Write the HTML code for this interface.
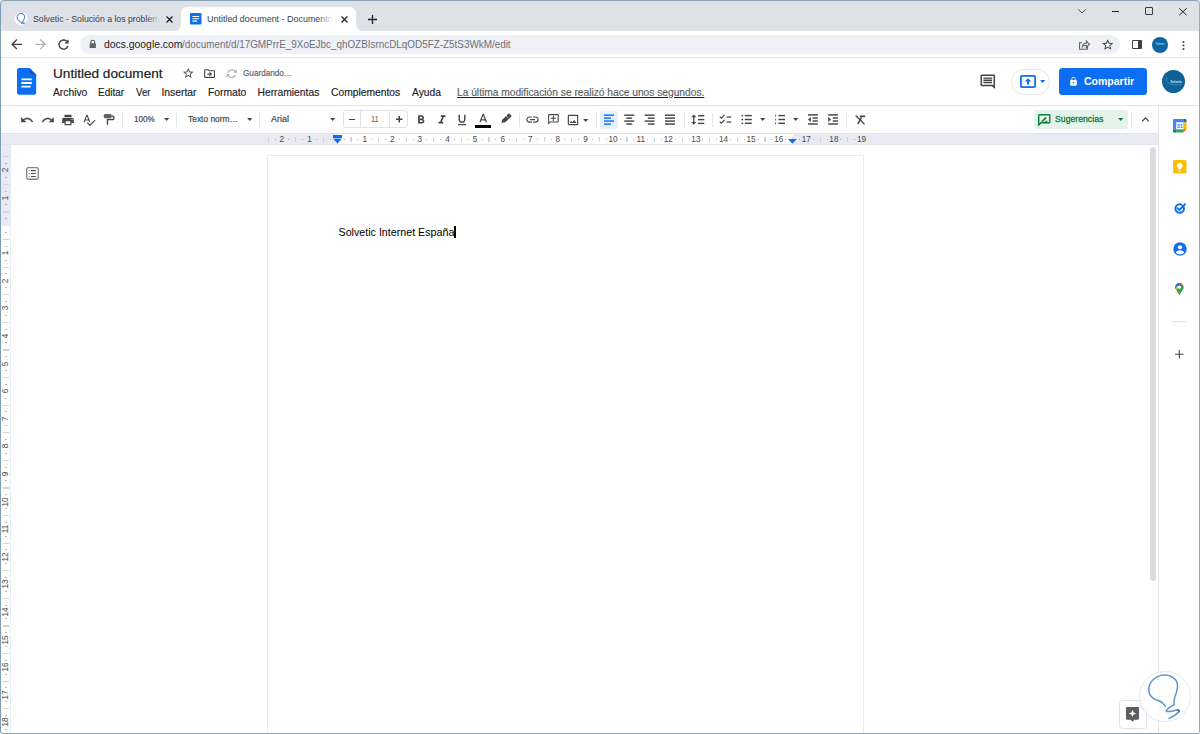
<!DOCTYPE html>
<html lang="es"><head><meta charset="utf-8"><title>Untitled document - Documentos de Google</title>
<style>
*{margin:0;padding:0;box-sizing:border-box}
html,body{width:1200px;height:734px;overflow:hidden;background:#fff}
body{position:relative;font-family:"Liberation Sans",sans-serif;color:#202124}
.a{position:absolute}
.t{position:absolute;white-space:nowrap;line-height:1;transform-origin:0 50%}
svg{position:absolute;overflow:visible}
.sep{position:absolute;width:1px;background:#e4e6ee}
/* chrome */
#tabstrip{left:0;top:0;width:1200px;height:31px;background:#dfe1e9}
#tab2{left:181px;top:7px;width:175px;height:24px;background:#fff;border-radius:6px 6px 0 0}
#navbar{left:0;top:31px;width:1200px;height:26px;background:#fff}
#omni{left:80px;top:35px;width:1040px;height:19px;border-radius:9.500px;background:#eff1f7}
#navline{left:0;top:57px;width:1200px;height:1px;background:#e3e5e8}
/* docs */
#tbline{left:0;top:105px;width:1200px;height:1px;background:#e1e3e6}
#ruler{left:1px;top:133px;width:1157px;height:12px;background:#e9eaf3;border-top:1px solid #e0e1e8}
#rulerw{left:338px;top:134px;width:454.500px;height:10px;background:#fff}
#rulerline{left:1px;top:144px;width:1157px;height:1px;background:#e2e3ec}
#vruler{left:1px;top:145px;width:10px;height:589px;background:#fff;border-right:1px solid #eceef3}
#vrulerg{left:1px;top:145px;width:9.500px;height:81px;background:#e9eaf3}
#page{left:267px;top:155px;width:597px;height:600px;background:#fff;border:1px solid #eaebee}
#side{left:1158px;top:106px;width:41px;height:628px;background:#fff;border-left:1px solid #e1e3e6}
#scroll{left:1150px;top:147px;width:6px;height:434px;border-radius:3px;background:#dadce0}
.m{top:88px;font-size:10.300px;color:#202124;-webkit-text-stroke:.15px #202124}
.tb{top:113.600px;font-size:9.400px;color:#444746;-webkit-text-stroke:.2px #444746}
.rn{top:135.500px;width:20px;text-align:center;font-size:8.200px;color:#474a4e}
.rb{top:136.600px;width:1.300px;height:5.500px;background:#d2d4dc}
.rd{top:139px;width:1px;height:1px;background:#a9adb4}
.vn{left:1.300px;width:10px;height:8px;text-align:center;font-size:8.200px;color:#474a4e;transform:rotate(-90deg);transform-origin:50% 50%}
.vb{left:3px;width:5.500px;height:1.300px;background:#d2d4dc}
.vd{left:4.500px;width:2px;height:1px;background:#b4b8bf}
/* window border */
#wb{left:0;top:0;width:1200px;height:734px;border:1px solid #8aa3b4;border-left-color:#7f9db3;border-right-color:#a3a9b0;border-bottom-color:#8fa3b1;border-radius:5px 5px 3px 3px;pointer-events:none}
</style></head><body>

<!-- CHROME -->
<div class="a" id="tabstrip"></div>
<div class="a" id="tab2"></div>
<div class="a" id="navbar"></div>
<div class="a" id="omni"></div>
<div class="a" id="navline"></div>


<!-- tab 1 -->
<svg style="left:15px;top:12px" width="12" height="14" viewBox="0 0 12 14"><circle cx="6" cy="6.5" r="6.5" fill="#fff"/><path d="M7.3 10.6C3.2 9.2 1.2 6.6 2.3 3.9 3.3 1.4 6.6.7 8.5 2.3c1.7 1.5 1.3 4-.2 6.2-.4.7-.6 1.500-.4 2.300" fill="none" stroke="#5b8fc7" stroke-width="1.1" stroke-linecap="round"/><path d="M6.400 11.300c.8-.500 1.500-.400 2.100.100" fill="none" stroke="#4a86c8" stroke-width="1.100" stroke-linecap="round"/><circle cx="9" cy="11.400" r=".800" fill="#3b82f6"/></svg>
<div class="t" id="tt1" style="left:32.500px;top:14.300px;font-size:9.800px;transform:scaleX(.89);color:#3c4043;width:143.500px;overflow:hidden">Solvetic - Solución a los problemas</div>
<div class="a" style="left:147px;top:10px;width:14px;height:18px;background:linear-gradient(90deg,rgba(223,225,233,0),#dfe1e9 90%)"></div>
<svg style="left:166px;top:15.500px" width="7" height="7" viewBox="0 0 7 7"><path d="M.5.500l6 6M6.500.500l-6 6" stroke="#202124" stroke-width="1.300" fill="none"/></svg>
<!-- tab 2 -->
<div class="a" style="left:175px;top:25px;width:6px;height:6px;background:radial-gradient(circle at 0 0,rgba(255,255,255,0) 5.500px,#fff 6px)"></div>
<div class="a" style="left:356px;top:25px;width:6px;height:6px;background:radial-gradient(circle at 100% 0,rgba(255,255,255,0) 5.500px,#fff 6px)"></div>
<svg style="left:189.500px;top:13px" width="11.500" height="11.500" viewBox="0 0 12 12"><rect width="12" height="12" rx="1.300" fill="#0b6ef3"/><path d="M2.500 3.600h7M2.500 6h7M2.500 8.400h5" stroke="#fff" stroke-width="1.200"/></svg>
<div class="t" id="tt2" style="left:207px;top:14.300px;font-size:9.800px;transform:scaleX(.913);color:#3c4043;width:140.200px;overflow:hidden">Untitled document - Documentos de Google</div>
<div class="a" style="left:318px;top:10px;width:18px;height:18px;background:linear-gradient(90deg,rgba(255,255,255,0),#fff 85%)"></div>
<svg style="left:340.500px;top:15.500px" width="7" height="7" viewBox="0 0 7 7"><path d="M.5.500l6 6M6.500.500l-6 6" stroke="#202124" stroke-width="1.300" fill="none"/></svg>
<svg style="left:367.500px;top:14.500px" width="9" height="9" viewBox="0 0 9 9"><path d="M4.500 0v9M0 4.500h9" stroke="#202124" stroke-width="1.300" fill="none"/></svg>
<!-- window controls -->
<svg style="left:1078px;top:8.700px" width="8" height="4.500" viewBox="0 0 9 5"><path d="M.4.400l4.100 4 4.100-4" stroke="#3c4043" stroke-width="1" fill="none"/></svg>
<div class="a" style="left:1112px;top:10.800px;width:7px;height:1.300px;background:#202124"></div>
<div class="a" style="left:1144.500px;top:7px;width:8.500px;height:8px;border:1px solid #3c4043;border-radius:1px"></div>
<svg style="left:1178.500px;top:7.500px" width="8" height="7.500" viewBox="0 0 8 7.500"><path d="M.3.300l7.400 6.900M7.700.300L.3 7.200" stroke="#202124" stroke-width="1" fill="none"/></svg>
<!-- nav -->
<svg style="left:0;top:30px" width="110" height="30" viewBox="0 30 110 30"><path d="M22.200 44.300H12.300M16.900 39.500l-4.800 4.800 4.800 4.800" fill="none" stroke="#3c4043" stroke-width="1.350"/><path d="M35.200 44.300h9.700M40.300 39.500l4.800 4.800-4.800 4.800" fill="none" stroke="#a9b1b9" stroke-width="1.300"/><path d="M67.900 46.100a4.550 4.550 0 1 1-1.200-4.900" fill="none" stroke="#3c4043" stroke-width="1.400"/><path d="M68.600 39.300v4.200h-4.200z" fill="#3c4043"/><path d="M90.900 43.400v-1.300a1.900 1.900 0 0 1 3.800 0v1.300" fill="none" stroke="#5f6368" stroke-width="1.150"/><rect x="89.700" y="43.200" width="6.200" height="4.800" rx=".6" fill="#5f6368"/></svg>
<div class="t" id="url" style="left:104px;top:40.400px;font-size:10.380px;color:#6b7075"><span style="color:#202124">docs.google.com</span><span style="display:inline-block;transform:scaleX(.953);transform-origin:0 50%">/document/d/17GMPrrE_9XoEJbc_qhOZBIsrncDLqOD5FZ-Z5tS3WkM/edit</span></div>
<svg style="left:1077px;top:37.700px" width="13.600" height="13.600" viewBox="0 0 24 24"><path fill="none" stroke="#5f6368" stroke-width="1.900" d="M9 8.500H4.500V20h14v-4.500M9.500 15.500c.5-4 3.500-6 7-6.200V5.500l5.500 5.500-5.500 5.500v-3.700c-3.500 0-5.500.700-7 2.700z"/></svg>
<svg style="left:1100.500px;top:37.500px" width="13.500" height="13.500" viewBox="0 0 24 24"><path fill="#3c4043" d="M22 9.240l-7.190-.620L12 2 9.190 8.630 2 9.240l5.460 4.730L5.820 21 12 17.270 18.180 21l-1.630-7.030L22 9.240zM12 15.400l-3.760 2.270 1-4.280-3.320-2.880 4.380-.380L12 6.100l1.710 4.040 4.380.380-3.320 2.880 1 4.280L12 15.400z"/></svg>
<div class="a" style="left:1131.500px;top:39.500px;width:10.500px;height:9.500px;border:1.500px solid #3c4043;border-right-width:4px;border-radius:1px"></div>
<div class="a" style="left:1152px;top:36.500px;width:16px;height:16px;border-radius:50%;background:#0d65a3"></div>
<div class="t" style="left:1155.500px;top:43.500px;font-size:2.600px;color:#cfe3f3">Solvetic</div>
<svg style="left:1182px;top:40.500px" width="3" height="9" viewBox="0 0 3 9"><circle cx="1.500" cy="1.100" r="1" fill="#3c4043"/><circle cx="1.500" cy="4.500" r="1" fill="#3c4043"/><circle cx="1.500" cy="7.900" r="1" fill="#3c4043"/></svg>

<!-- DOCS -->

<!-- header -->
<svg style="left:17.400px;top:68.200px" width="19.200" height="26.700" viewBox="0 0 19.200 26.700"><path d="M1.900 0h10.600l6.700 6.700v18.100c0 1.050-.85 1.900-1.900 1.900H1.900C.85 26.700 0 25.850 0 24.800V1.900C0 .85.850 0 1.900 0z" fill="#0b6ef3"/><path d="M12.500 0l6.700 6.700v1.200l-6.700-3.500z" fill="#0557d8"/><path d="M4.400 11.400h10.400M4.400 15h10.400M4.400 18.700h9.200" stroke="#fff" stroke-width="1.800"/></svg>
<div class="t" id="title" style="left:53px;top:67px;font-size:13.600px;color:#202124;-webkit-text-stroke:.2px #202124">Untitled document</div>
<svg style="left:181.700px;top:67px" width="12.600" height="12.600" viewBox="0 0 24 24"><path fill="#444746" d="M22 9.240l-7.190-.620L12 2 9.190 8.630 2 9.240l5.460 4.730L5.820 21 12 17.270 18.180 21l-1.630-7.030L22 9.240zM12 15.400l-3.760 2.270 1-4.280-3.320-2.880 4.380-.380L12 6.100l1.710 4.040 4.380.380-3.320 2.880 1 4.280L12 15.400z"/></svg>
<svg style="left:203px;top:67.100px" width="13.100" height="13.100" viewBox="0 0 24 24"><path fill="#444746" d="M20 6h-8l-2-2H4c-1.100 0-2 .900-2 2v12c0 1.100.900 2 2 2h16c1.100 0 2-.900 2-2V8c0-1.100-.900-2-2-2zm0 12H4V6h5.170l2 2H20v10zm-7.160-4H8v-2h4.840l-1.590-1.590L12.660 9l4 4-4 4-1.410-1.410L12.840 14z"/></svg>
<svg style="left:224px;top:66px" width="16" height="16" viewBox="224 66 16 16"><path d="M227.93 72.59A3.9 3.9 0 0 1 235.23 71.95" fill="none" stroke="#a4aab1" stroke-width="1.150"/><path d="M235.47 74.61A3.9 3.9 0 0 1 228.17 75.25" fill="none" stroke="#a4aab1" stroke-width="1.150"/><path d="M236.83 69.55v3.300h-3.300z" fill="#a4aab1"/><path d="M226.57 77.65v-3.300h3.300z" fill="#a4aab1"/></svg>
<div class="t" id="saving" style="left:243px;top:69px;font-size:8.800px;transform:scaleX(.928);-webkit-text-stroke:.2px #5f6368;color:#5f6368">Guardando…</div>
<div class="t m" id="m1" style="left:53px">Archivo</div>
<div class="t m" id="m2" style="left:98.250px;transform:scaleX(.966)">Editar</div>
<div class="t m" id="m3" style="left:135.500px;transform:scaleX(.937)">Ver</div>
<div class="t m" id="m4" style="left:161.500px">Insertar</div>
<div class="t m" id="m5" style="left:208px">Formato</div>
<div class="t m" id="m6" style="left:257.500px">Herramientas</div>
<div class="t m" id="m7" style="left:331px">Complementos</div>
<div class="t m" id="m8" style="left:412px">Ayuda</div>
<div class="t m" id="m9" style="left:456.500px;color:#6b7075;transform:scaleX(.991);text-decoration:underline;text-underline-offset:1px">La última modificación se realizó hace unos segundos.</div>
<!-- header right -->
<svg style="left:979px;top:72.500px" width="17.500" height="17.500" viewBox="0 0 24 24"><path fill="#3c4043" d="M20 2H4c-1.100 0-2 .900-2 2v12c0 1.100.900 2 2 2h14l4 4V4c0-1.100-.900-2-2-2zm0 15.170L18.830 16H4V4h16v13.170zM6 12h12v2H6zm0-3h12v2H6zm0-3h12v2H6z"/></svg>
<div class="a" style="left:1011px;top:68.500px;width:39px;height:26px;border:1px solid #e3e6ec;border-radius:13px"></div>
<svg style="left:1019.500px;top:75px" width="16" height="13" viewBox="0 0 16 13"><rect x=".9" y=".9" width="14.200" height="11.200" rx="1.200" fill="none" stroke="#0b6ef3" stroke-width="1.800"/><path d="M8 3.200L4.800 6.500h2.200v3h2v-3h2.200z" fill="#0b6ef3"/></svg>
<svg style="left:1039.500px;top:80px" width="5.400" height="3" viewBox="0 0 6 3.500"><path d="M0 0h6L3 3.500z" fill="#0b6ef3"/></svg>
<div class="a" style="left:1059px;top:68.200px;width:88px;height:26.500px;border-radius:3.500px;background:#0b6ef3"></div>
<svg style="left:1070px;top:76.700px" width="7" height="8.700" viewBox="4 1 16 21"><path fill="#fff" d="M18 8h-1V6c0-2.760-2.240-5-5-5S7 3.240 7 6v2H6c-1.100 0-2 .900-2 2v10c0 1.100.900 2 2 2h12c1.100 0 2-.900 2-2V10c0-1.100-.900-2-2-2zm-6 9c-1.100 0-2-.900-2-2s.900-2 2-2 2 .900 2 2-.900 2-2 2zm3.100-9H8.900V6c0-1.710 1.390-3.100 3.100-3.100 1.710 0 3.100 1.390 3.100 3.100v2z"/></svg>
<div class="t" id="share" style="left:1084px;top:76px;font-size:10.500px;font-weight:bold;color:#fff">Compartir</div>
<div class="a" style="left:1161.500px;top:69.500px;width:23.500px;height:23.500px;border-radius:50%;background:#0e6199"></div>
<svg style="left:1164px;top:75px" width="19" height="12" viewBox="0 0 19 12"><path d="M3 2c-1.500 1.500-.5 4.500 1.500 6 3 2 8 2.500 13 1.500" fill="none" stroke="#9cc4e0" stroke-width=".4"/></svg>
<div class="t" style="left:1170.500px;top:80.500px;font-size:3px;color:#d6e6f2;font-weight:bold">Solvetic</div>
<div class="a" id="tbline"></div>
<!-- toolbar -->
<svg style="left:20px;top:112.5px" width="14" height="14" viewBox="0 0 24 24"><path fill="#444746" d="M12.500 8c-2.650 0-5.050.990-6.900 2.600L2 7v9h9l-3.620-3.620c1.390-1.160 3.160-1.880 5.120-1.880 3.540 0 6.550 2.310 7.600 5.500l2.370-.780C21.080 11.030 17.150 8 12.500 8z"/></svg>
<svg style="left:40.5px;top:112.5px" width="14" height="14" viewBox="0 0 24 24"><path fill="#444746" d="M18.400 10.600C16.550 8.990 14.150 8 11.500 8c-4.650 0-8.580 3.030-9.960 7.220L3.900 16c1.050-3.190 4.050-5.500 7.600-5.500 1.950 0 3.730.720 5.120 1.880L13 16h9V7l-3.600 3.600z"/></svg>
<svg style="left:61px;top:112.5px" width="14" height="14" viewBox="0 0 24 24"><path fill="#444746" d="M19 8H5c-1.660 0-3 1.340-3 3v6h4v4h12v-4h4v-6c0-1.660-1.340-3-3-3zm-3 11H8v-5h8v5zm3-7c-.550 0-1-.450-1-1s.450-1 1-1 1 .450 1 1-.450 1-1 1zm-1-9H6v4h12V3z"/></svg>
<svg style="left:81.5px;top:113px" width="14" height="14" viewBox="0 0 24 24"><path fill="#444746" d="M12.450 16h2.090L9.430 3H7.570L2.460 16h2.090l1.120-3h5.640l1.140 3zm-6.020-5L8.500 5.480 10.570 11H6.430zm15.160.590l-8.090 8.090L9.830 16l-1.410 1.410 5.090 5.090L23 13l-1.410-1.410z"/></svg>
<svg style="left:100px;top:110px" width="20" height="20" viewBox="100 110 20 20"><rect x="104.200" y="114.600" width="7" height="3.100" rx=".5" fill="#5f6368" stroke="#444746" stroke-width=".7"/><path d="M111.500 116.100h1.300q1.050 0 1.050 1.050v1.300q0 1.050-1.050 1.050h-5.350v5.300" fill="none" stroke="#444746" stroke-width="1.350"/></svg>
<div class="sep" style="left:122px;top:113px;height:14px"></div>
<div class="t tb" id="zoom" style="left:133.750px;transform:scaleX(.861)">100%</div>
<svg style="left:164px;top:118.3px" width="5.400" height="3" viewBox="0 0 6 3.500"><path d="M0 0h6L3 3.500z" fill="#444746"/></svg>
<div class="sep" style="left:176px;top:113px;height:14px"></div>
<div class="t tb" id="style" style="left:188px;transform:scaleX(.897)">Texto norm…</div>
<svg style="left:246.5px;top:118.3px" width="5.400" height="3" viewBox="0 0 6 3.500"><path d="M0 0h6L3 3.500z" fill="#444746"/></svg>
<div class="sep" style="left:259px;top:113px;height:14px"></div>
<div class="t tb" id="font" style="left:271px;transform:scaleX(.959)">Arial</div>
<svg style="left:329.5px;top:118.3px" width="5.400" height="3" viewBox="0 0 6 3.500"><path d="M0 0h6L3 3.500z" fill="#444746"/></svg>
<div class="a" style="left:342.500px;top:110.400px;width:65.200px;height:18px;border:1px solid #e0e3ea;border-radius:3px"></div>
<div class="a" style="left:360px;top:110.400px;width:1px;height:18px;background:#e0e3ea"></div><div class="a" style="left:389px;top:110.400px;width:1px;height:18px;background:#e0e3ea"></div>
<div class="a" style="left:349px;top:118.700px;width:6.300px;height:1.600px;background:#444746"></div>
<div class="t tb" id="fsize" style="left:371px;transform:scaleX(.8);-webkit-text-stroke:0;color:#5f6368">11</div>
<svg style="left:395.500px;top:116.400px" width="6.500" height="6.500" viewBox="0 0 6.500 6.500"><path d="M3.250 0v6.500M0 3.250h6.500" stroke="#444746" stroke-width="1.550"/></svg>
<svg style="left:414px;top:112.5px" width="14" height="14" viewBox="0 0 24 24"><path fill="#444746" d="M15.600 10.790c.970-.670 1.650-1.770 1.650-2.790 0-2.260-1.750-4-4-4H7v14h7.040c2.090 0 3.710-1.700 3.710-3.790 0-1.520-.860-2.820-2.150-3.420zM10 6.500h3c.830 0 1.500.670 1.500 1.500s-.670 1.500-1.500 1.500h-3v-3zm3.500 9H10v-3h3.500c.830 0 1.500.670 1.500 1.500s-.670 1.500-1.500 1.500z"/></svg>
<svg style="left:435px;top:112.5px" width="14" height="14" viewBox="0 0 24 24"><path fill="#444746" d="M10 4v3h2.210l-3.420 8H6v3h8v-3h-2.210l3.420-8H18V4z"/></svg>
<svg style="left:455px;top:113px" width="14" height="14" viewBox="0 0 24 24"><path fill="#444746" d="M12 17c3.310 0 6-2.690 6-6V3h-2.500v8c0 1.930-1.570 3.500-3.500 3.500S8.500 12.930 8.500 11V3H6v8c0 3.310 2.690 6 6 6zm-7 2v2h14v-2H5z"/></svg>
<svg style="left:476.400px;top:111.700px" width="14.400" height="14.400" viewBox="0 0 24 24"><path fill="#444746" d="M11 3L5.500 17h2.250l1.120-3h6.250l1.120 3h2.250L13 3h-2zm-1.380 9L12 5.670 14.380 12H9.620z"/></svg>
<div class="a" style="left:475.200px;top:125.300px;width:16.100px;height:2.900px;background:#000"></div>
<svg style="left:499.800px;top:112.600px" width="12" height="12" viewBox="0 0 24 24"><path fill="#444746" d="M18.500 1.150c-.390-.390-1.020-.390-1.410 0l-4.340 4.340 5.660 5.660 4.340-4.340c.390-.390.390-1.020 0-1.410L18.500 1.150zM11.500 6.740L4.590 13.650c-.380.380-.590.890-.590 1.420V17l-2 2.500h5l1-1h1.930c.530 0 1.040-.210 1.420-.590l6.910-6.910L11.500 6.740z"/></svg>
<div class="sep" style="left:519px;top:113px;height:14px"></div>
<svg style="left:525.3px;top:112px" width="15" height="15" viewBox="0 0 24 24"><path fill="#444746" d="M3.900 12c0-1.710 1.390-3.100 3.100-3.100h4V7H7c-2.760 0-5 2.240-5 5s2.240 5 5 5h4v-1.900H7c-1.710 0-3.100-1.390-3.100-3.100zM8 13h8v-2H8v2zm9-6h-4v1.900h4c1.710 0 3.100 1.390 3.100 3.100s-1.390 3.100-3.100 3.100h-4V17h4c2.760 0 5-2.240 5-5s-2.240-5-5-5z"/></svg>
<svg style="left:547px;top:113.400px" width="12.800" height="12.800" viewBox="0 0 24 24"><path fill="#444746" d="M2 4c0-1.100.9-2 2-2h16c1.100 0 2 .9 2 2v12c0 1.100-.9 2-2 2H6l-4 4V4zm2 13.170L5.170 16H20V4H4v13.170zM11 5h2v4h4v2h-4v4h-2v-4H7V9h4z"/></svg>
<svg style="left:565.8px;top:112.5px" width="14" height="14" viewBox="0 0 24 24"><path fill="#444746" d="M19 5v14H5V5h14m0-2H5c-1.100 0-2 .9-2 2v14c0 1.100.9 2 2 2h14c1.100 0 2-.9 2-2V5c0-1.100-.9-2-2-2zm-4.860 8.860l-3 3.870L9 13.140 6 17h12l-3.860-5.140z"/></svg>
<svg style="left:582.800px;top:118.600px" width="5.400" height="3" viewBox="0 0 6 3.500"><path d="M0 0h6L3 3.500z" fill="#444746"/></svg>
<div class="sep" style="left:595.5px;top:113px;height:14px"></div>
<div class="a" style="left:600px;top:110.500px;width:18px;height:18px;border-radius:2px;background:#e4f0fd"></div>
<div class="sep" style="left:683.5px;top:113px;height:14px"></div>
<div class="sep" style="left:711.5px;top:113px;height:14px"></div>
<svg style="left:759.8px;top:118.3px" width="5.400" height="3" viewBox="0 0 6 3.500"><path d="M0 0h6L3 3.500z" fill="#444746"/></svg>
<svg style="left:793px;top:118.3px" width="5.400" height="3" viewBox="0 0 6 3.500"><path d="M0 0h6L3 3.500z" fill="#444746"/></svg>
<div class="sep" style="left:846.3px;top:113px;height:14px"></div>
<div class="a" style="left:1034px;top:110.300px;width:94px;height:18.500px;border-radius:3px;background:#e4f4ea"></div>
<svg style="left:1037.700px;top:113.500px" width="12.500" height="11.500" viewBox="0 0 12.500 11.500"><path d="M1.400.700h9.700c.4 0 .7.300.7.700v6.700c0 .4-.3.700-.7.700H3.100L.7 10.900V1.400c0-.4.300-.7.700-.7z" fill="none" stroke="#0f7b3b" stroke-width="1.400"/><path d="M3.300 6.900l4.300-3.800 1.200 1.200L4.700 7.800H3.300zM6.300 7.800h3.100V6.700H7.500z" fill="#0f7b3b"/></svg>
<div class="t tb" id="sug" style="left:1055px;top:113.700px;transform:scaleX(.927);color:#0f7b3b;-webkit-text-stroke:.3px #0f7b3b">Sugerencias</div>
<svg style="left:1118.3px;top:118.3px" width="5.400" height="3" viewBox="0 0 6 3.500"><path d="M0 0h6L3 3.500z" fill="#0f7b3b"/></svg>
<div class="sep" style="left:1131.2px;top:113px;height:14px"></div>
<svg style="left:1137.8px;top:112px" width="15" height="15" viewBox="0 0 24 24"><path fill="#444746" d="M12 8l-6 6 1.410 1.410L12 10.830l4.590 4.580L18 14z"/></svg>
<div class="a" id="ruler"></div>
<div class="a" id="rulerw"></div>
<div class="a" id="rulerline"></div>
<div class="a" id="vruler"></div>
<div class="a" id="vrulerg"></div>
<svg style="left:590px;top:106px" width="300" height="27" viewBox="590 106 300 27"><path d="M604 115.2H614" stroke="#0b6ef3" stroke-width="1.45"/><path d="M604 118.15H611" stroke="#0b6ef3" stroke-width="1.45"/><path d="M604 121.1H614" stroke="#0b6ef3" stroke-width="1.45"/><path d="M604 124.05H611" stroke="#0b6ef3" stroke-width="1.45"/><path d="M624.2 115.2H634.2" stroke="#444746" stroke-width="1.45"/><path d="M626.2 118.15H632.2" stroke="#444746" stroke-width="1.45"/><path d="M624.2 121.1H634.2" stroke="#444746" stroke-width="1.45"/><path d="M626.2 124.05H632.2" stroke="#444746" stroke-width="1.45"/><path d="M644.6 115.2H654.6" stroke="#444746" stroke-width="1.45"/><path d="M647.8 118.15H654.6" stroke="#444746" stroke-width="1.45"/><path d="M644.6 121.1H654.6" stroke="#444746" stroke-width="1.45"/><path d="M647.8 124.05H654.6" stroke="#444746" stroke-width="1.45"/><path d="M665 115.2H675" stroke="#444746" stroke-width="1.45"/><path d="M665 118.15H675" stroke="#444746" stroke-width="1.45"/><path d="M665 121.1H675" stroke="#444746" stroke-width="1.45"/><path d="M665 124.05H675" stroke="#444746" stroke-width="1.45"/><path d="M693.800 116.300V122.900" stroke="#444746" stroke-width="1.300"/><path d="M691.300 117.200l2.500-2.800 2.500 2.800zM691.300 122l2.500 2.800 2.500-2.800z" fill="#444746"/><path d="M698 115.8H704.3" stroke="#444746" stroke-width="1.45"/><path d="M698 119.6H704.3" stroke="#444746" stroke-width="1.45"/><path d="M698 123.4H704.3" stroke="#444746" stroke-width="1.45"/><path d="M719.800 116.6l1.600 1.600 3.200-3.400" fill="none" stroke="#444746" stroke-width="1.200"/><path d="M726.6 117H731.2" stroke="#444746" stroke-width="1.3"/><path d="M719.800 121.6l1.600 1.600 3.200-3.400" fill="none" stroke="#444746" stroke-width="1.200"/><path d="M726.6 122H731.2" stroke="#444746" stroke-width="1.3"/><circle cx="742.400" cy="115.6" r=".9" fill="#444746"/><path d="M744.8 115.6H751.8" stroke="#444746" stroke-width="1.45"/><circle cx="742.400" cy="119.5" r=".9" fill="#444746"/><path d="M744.8 119.5H751.8" stroke="#444746" stroke-width="1.45"/><circle cx="742.400" cy="123.3" r=".9" fill="#444746"/><path d="M744.8 123.3H751.8" stroke="#444746" stroke-width="1.45"/><path d="M775.600 114.5v2.200" stroke="#444746" stroke-width=".8"/><path d="M778.4 115.6H785" stroke="#444746" stroke-width="1.45"/><path d="M775.600 118.4v2.200" stroke="#444746" stroke-width=".8"/><path d="M778.4 119.5H785" stroke="#444746" stroke-width="1.45"/><path d="M775.600 122.2v2.200" stroke="#444746" stroke-width=".8"/><path d="M778.4 123.3H785" stroke="#444746" stroke-width="1.45"/><path d="M808 114.9H817.8" stroke="#444746" stroke-width="1.45"/><path d="M812.6 118H817.8" stroke="#444746" stroke-width="1.45"/><path d="M812.6 121H817.8" stroke="#444746" stroke-width="1.45"/><path d="M808 124H817.8" stroke="#444746" stroke-width="1.45"/><path d="M808 119.500l2.900-2.500v5z" fill="#444746"/><path d="M828.2 114.9H838" stroke="#444746" stroke-width="1.45"/><path d="M832.8 118H838" stroke="#444746" stroke-width="1.45"/><path d="M832.8 121H838" stroke="#444746" stroke-width="1.45"/><path d="M828.2 124H838" stroke="#444746" stroke-width="1.45"/><path d="M831.100 119.500l-2.900-2.500v5z" fill="#444746"/><path d="M855.700 115.500l8.800 8.800" stroke="#444746" stroke-width="1.250"/><path d="M857.800 124.200l3.700-6.800" stroke="#444746" stroke-width="1.500"/><path d="M859.700 116.300h5.500" stroke="#444746" stroke-width="1.700"/></svg>
<!-- ruler ticks -->
<div class="a rb" style="left:267.6px"></div><div class="a rd" style="left:274.5px"></div><div class="t rn" style="left:271.9px">2</div><div class="a rd" style="left:288.3px"></div><div class="a rb" style="left:295.2px"></div><div class="a rd" style="left:302.1px"></div><div class="t rn" style="left:299.5px">1</div><div class="a rd" style="left:315.9px"></div><div class="a rb" style="left:322.8px"></div><div class="a rd" style="left:329.7px"></div><div class="a rd" style="left:343.5px"></div><div class="a rb" style="left:350.4px"></div><div class="a rd" style="left:357.3px"></div><div class="t rn" style="left:354.7px">1</div><div class="a rd" style="left:371.1px"></div><div class="a rb" style="left:378.0px"></div><div class="a rd" style="left:384.9px"></div><div class="t rn" style="left:382.3px">2</div><div class="a rd" style="left:398.7px"></div><div class="a rb" style="left:405.6px"></div><div class="a rd" style="left:412.5px"></div><div class="t rn" style="left:409.9px">3</div><div class="a rd" style="left:426.3px"></div><div class="a rb" style="left:433.2px"></div><div class="a rd" style="left:440.1px"></div><div class="t rn" style="left:437.5px">4</div><div class="a rd" style="left:453.9px"></div><div class="a rb" style="left:460.8px"></div><div class="a rd" style="left:467.7px"></div><div class="t rn" style="left:465.1px">5</div><div class="a rd" style="left:481.5px"></div><div class="a rb" style="left:488.4px"></div><div class="a rd" style="left:495.3px"></div><div class="t rn" style="left:492.7px">6</div><div class="a rd" style="left:509.1px"></div><div class="a rb" style="left:516.0px"></div><div class="a rd" style="left:522.9px"></div><div class="t rn" style="left:520.3px">7</div><div class="a rd" style="left:536.7px"></div><div class="a rb" style="left:543.6px"></div><div class="a rd" style="left:550.5px"></div><div class="t rn" style="left:547.9px">8</div><div class="a rd" style="left:564.3px"></div><div class="a rb" style="left:571.2px"></div><div class="a rd" style="left:578.1px"></div><div class="t rn" style="left:575.5px">9</div><div class="a rd" style="left:591.9px"></div><div class="a rb" style="left:598.8px"></div><div class="a rd" style="left:605.7px"></div><div class="t rn" style="left:603.1px">10</div><div class="a rd" style="left:619.5px"></div><div class="a rb" style="left:626.4px"></div><div class="a rd" style="left:633.3px"></div><div class="t rn" style="left:630.7px">11</div><div class="a rd" style="left:647.1px"></div><div class="a rb" style="left:654.0px"></div><div class="a rd" style="left:660.9px"></div><div class="t rn" style="left:658.3px">12</div><div class="a rd" style="left:674.7px"></div><div class="a rb" style="left:681.6px"></div><div class="a rd" style="left:688.5px"></div><div class="t rn" style="left:685.9px">13</div><div class="a rd" style="left:702.3px"></div><div class="a rb" style="left:709.2px"></div><div class="a rd" style="left:716.1px"></div><div class="t rn" style="left:713.5px">14</div><div class="a rd" style="left:729.9px"></div><div class="a rb" style="left:736.8px"></div><div class="a rd" style="left:743.7px"></div><div class="t rn" style="left:741.1px">15</div><div class="a rd" style="left:757.5px"></div><div class="a rb" style="left:764.4px"></div><div class="a rd" style="left:771.3px"></div><div class="t rn" style="left:768.7px">16</div><div class="a rd" style="left:785.1px"></div><div class="a rb" style="left:792.0px"></div><div class="a rd" style="left:798.9px"></div><div class="t rn" style="left:796.3px">17</div><div class="a rd" style="left:812.7px"></div><div class="a rb" style="left:819.6px"></div><div class="a rd" style="left:826.5px"></div><div class="t rn" style="left:823.9px">18</div><div class="a rd" style="left:840.3px"></div><div class="a rb" style="left:847.2px"></div><div class="a rd" style="left:854.1px"></div><div class="t rn" style="left:851.5px">19</div>
<div class="a vb" style="top:156.1px"></div><div class="a vd" style="top:163.0px"></div><div class="t vn" style="top:166.4px">2</div><div class="a vd" style="top:176.8px"></div><div class="a vb" style="top:183.7px"></div><div class="a vd" style="top:190.6px"></div><div class="t vn" style="top:194.0px">1</div><div class="a vd" style="top:204.4px"></div><div class="a vb" style="top:211.3px"></div><div class="a vd" style="top:218.2px"></div><div class="a vd" style="top:232.0px"></div><div class="a vb" style="top:238.9px"></div><div class="a vd" style="top:245.8px"></div><div class="t vn" style="top:249.2px">1</div><div class="a vd" style="top:259.6px"></div><div class="a vb" style="top:266.5px"></div><div class="a vd" style="top:273.4px"></div><div class="t vn" style="top:276.8px">2</div><div class="a vd" style="top:287.2px"></div><div class="a vb" style="top:294.1px"></div><div class="a vd" style="top:301.0px"></div><div class="t vn" style="top:304.4px">3</div><div class="a vd" style="top:314.8px"></div><div class="a vb" style="top:321.7px"></div><div class="a vd" style="top:328.6px"></div><div class="t vn" style="top:332.0px">4</div><div class="a vd" style="top:342.4px"></div><div class="a vb" style="top:349.3px"></div><div class="a vd" style="top:356.2px"></div><div class="t vn" style="top:359.6px">5</div><div class="a vd" style="top:370.0px"></div><div class="a vb" style="top:376.9px"></div><div class="a vd" style="top:383.8px"></div><div class="t vn" style="top:387.2px">6</div><div class="a vd" style="top:397.6px"></div><div class="a vb" style="top:404.5px"></div><div class="a vd" style="top:411.4px"></div><div class="t vn" style="top:414.8px">7</div><div class="a vd" style="top:425.2px"></div><div class="a vb" style="top:432.1px"></div><div class="a vd" style="top:439.0px"></div><div class="t vn" style="top:442.4px">8</div><div class="a vd" style="top:452.8px"></div><div class="a vb" style="top:459.7px"></div><div class="a vd" style="top:466.6px"></div><div class="t vn" style="top:470.0px">9</div><div class="a vd" style="top:480.4px"></div><div class="a vb" style="top:487.3px"></div><div class="a vd" style="top:494.2px"></div><div class="t vn" style="top:497.6px">10</div><div class="a vd" style="top:508.0px"></div><div class="a vb" style="top:514.9px"></div><div class="a vd" style="top:521.8px"></div><div class="t vn" style="top:525.2px">11</div><div class="a vd" style="top:535.6px"></div><div class="a vb" style="top:542.5px"></div><div class="a vd" style="top:549.4px"></div><div class="t vn" style="top:552.8px">12</div><div class="a vd" style="top:563.2px"></div><div class="a vb" style="top:570.1px"></div><div class="a vd" style="top:577.0px"></div><div class="t vn" style="top:580.4px">13</div><div class="a vd" style="top:590.8px"></div><div class="a vb" style="top:597.7px"></div><div class="a vd" style="top:604.6px"></div><div class="t vn" style="top:608.0px">14</div><div class="a vd" style="top:618.4px"></div><div class="a vb" style="top:625.3px"></div><div class="a vd" style="top:632.2px"></div><div class="t vn" style="top:635.6px">15</div><div class="a vd" style="top:646.0px"></div><div class="a vb" style="top:652.9px"></div><div class="a vd" style="top:659.8px"></div><div class="t vn" style="top:663.2px">16</div><div class="a vd" style="top:673.6px"></div><div class="a vb" style="top:680.5px"></div><div class="a vd" style="top:687.4px"></div><div class="t vn" style="top:690.8px">17</div><div class="a vd" style="top:701.2px"></div><div class="a vb" style="top:708.1px"></div><div class="a vd" style="top:715.0px"></div><div class="t vn" style="top:718.4px">18</div><div class="a vd" style="top:728.8px"></div>
<svg style="left:333px;top:135.200px" width="9" height="8.500" viewBox="0 0 9 8.500"><path d="M0 0h9v3.200H0z" fill="#0b6ef3"/><path d="M.2 3.700h8.600L4.500 8.500z" fill="#0b6ef3"/></svg>
<svg style="left:788.200px;top:139px" width="8.800" height="4.800" viewBox="0 0 8.800 4.800"><path d="M0 0h8.800L4.400 4.800z" fill="#0b6ef3"/></svg>
<div class="a" id="page"></div>

<!-- doc content -->
<div class="t" id="doctext" style="left:338.500px;top:226.500px;font-size:10.700px;color:#000">Solvetic Internet España</div>
<div class="a" style="left:454.400px;top:226px;width:1.500px;height:12.300px;background:#000"></div>
<!-- outline -->
<svg style="left:25.800px;top:166.900px" width="12.900" height="12.900" viewBox="0 0 12.900 12.900"><rect x=".65" y=".65" width="11.600" height="11.600" rx="1.500" fill="none" stroke="#7f8287" stroke-width="1.300"/><path d="M2.700 3.600h1.200M2.700 6.550h1.200M2.700 9.500h1.200" stroke="#9aa5b1" stroke-width="1"/><path d="M5 3.600h4.900M5 6.550h4.900M5 9.500h4.900" stroke="#4a4d51" stroke-width="1.100"/></svg>
<div class="a" id="scroll"></div>
<div class="a" id="side"></div>


<!-- side panel -->
<svg style="left:1172.500px;top:118.900px" width="13.500" height="13.500" viewBox="0 0 200 200"><path d="M152 48H48v104h104z" fill="#fff"/><path d="M152 200l48-48h-48z" fill="#ea4335"/><path d="M200 48h-48v104h48z" fill="#fbbc04"/><path d="M152 152H48v48h104z" fill="#34a853"/><path d="M0 152v32c0 8.800 7.200 16 16 16h32v-48z" fill="#188038"/><path d="M200 48V16c0-8.800-7.200-16-16-16h-32v48z" fill="#1967d2"/><path d="M152 0H16C7.200 0 0 7.200 0 16v136h48V48h104z" fill="#4285f4"/><text x="100" y="132" font-family="Liberation Sans,sans-serif" font-size="88" font-weight="bold" text-anchor="middle" fill="#4285f4" letter-spacing="-6">31</text></svg>
<svg style="left:1172.500px;top:160px" width="13.500" height="13.500" viewBox="0 0 24 24"><rect x="0" y="0" width="24" height="24" rx="3" fill="#fbbc04"/><path d="M12 5c-2.800 0-5 2.200-5 5 0 1.700.8 3.100 2.100 4v1.800c0 .4.300.7.700.7h4.400c.4 0 .7-.3.700-.7V14c1.300-.9 2.100-2.400 2.100-4 0-2.800-2.200-5-5-5zM9.800 18.500h4.400v1.300H9.800z" fill="#fff"/></svg>
<svg style="left:1172.500px;top:201px" width="14" height="14" viewBox="0 0 24 24"><circle cx="11.500" cy="13" r="7.300" fill="none" stroke="#0b6ef3" stroke-width="3.400"/><circle cx="20" cy="5" r="4" fill="#fff"/><path d="M7.800 12.300l3.300 3.300 9.500-10.300" fill="none" stroke="#0b6ef3" stroke-width="3.200" stroke-linecap="round" stroke-linejoin="round"/></svg>
<svg style="left:1172.500px;top:242px" width="14" height="14" viewBox="0 0 24 24"><circle cx="12" cy="12" r="11.500" fill="#0b6ef3"/><circle cx="12" cy="9" r="3.600" fill="#fff"/><path d="M4.800 18c1.200-2.600 4-3.800 7.200-3.800s6 1.200 7.200 3.800c-1.700 2-4.300 3.300-7.200 3.300S6.500 20 4.800 18z" fill="#fff"/></svg>
<svg style="left:1175.400px;top:283.300px" width="8.800" height="11.800" viewBox="0 0 14 20"><path d="M7 0C3.100 0 0 3.100 0 7c0 1.700.6 3.300 1.700 4.500L7 20l5.300-8.500C13.400 10.300 14 8.700 14 7c0-3.900-3.100-7-7-7z" fill="#34a853"/><path d="M7 0C3.100 0 0 3.100 0 7c0 1.100.3 2.200.7 3.100L7 3z" fill="#0b6ef3"/><path d="M7 0c2.200 0 4.100 1 5.400 2.600L7 9 1.600 2.600C2.900 1 4.800 0 7 0z" fill="#ea4335" opacity="0"/><path d="M12.400 2.600C11.100 1 9.200 0 7 0v7z" fill="#ea4335"/><path d="M12.400 2.600L3 13.800c.5.900 2.500 3.500 4 6.200 1.500-3 4-6 5.300-8.500C13.400 10.300 14 8.700 14 7c0-1.700-.6-3.200-1.600-4.400z" fill="#34a853"/><path d="M1.600 11.400L9 2.600 4.400 1.300C2 2.400 0 4.500 0 7c0 1.700.6 3.200 1.600 4.400z" fill="#fbbc04" opacity=".0"/><path d="M.7 10.100c.3.500.6 1 1 1.400l4-4.800L3 4z" fill="#fbbc04"/><circle cx="7" cy="7" r="2.600" fill="#fff"/></svg>
<div class="a" style="left:1172px;top:321px;width:15px;height:1px;background:#e0e3ee"></div>
<svg style="left:1175.300px;top:350px" width="8.600" height="8.600" viewBox="0 0 8.600 8.600"><path d="M4.300 0v8.600M0 4.300h8.600" stroke="#444746" stroke-width="1.100"/></svg>
<!-- explore -->
<div class="a" style="left:1119px;top:700px;width:28px;height:28.500px;border:1px solid #dfe3ea;border-radius:3.500px;background:#fff"></div>
<svg style="left:1126.400px;top:706.900px" width="13" height="15" viewBox="0 0 13 15"><path d="M1.200 0h10.600c.7 0 1.200.5 1.200 1.200v10.400c0 .7-.5 1.200-1.200 1.200H8.300L6.500 14.800l-1.800-2H1.200C.5 12.800 0 12.300 0 11.600V1.200C0 .5.500 0 1.200 0z" fill="#5c5e61"/><path d="M6.500 2.700l1.100 2.700 2.700 1.100-2.700 1.100-1.100 2.700-1.100-2.700-2.700-1.100 2.700-1.100z" fill="#fff"/></svg>
<!-- watermark logo -->
<div class="a" style="left:1139.200px;top:670.600px;width:51.400px;height:51.400px;border-radius:50%;background:rgba(255,255,255,.72);border:1px solid #e4e9f2"></div>
<svg style="left:1139px;top:670px" width="52" height="52" viewBox="1139 670 52 52"><path d="M1165.400 706.400c-1.500-2.600-3.200-4.400-5.600-5.400-2.500-1-5-1.300-6.800-2.800-2-1.700-3.600-3.800-4.100-6.400-.5-2.500-.1-5.300 1.100-7.900 1.400-3 4.200-5.500 7.600-7.300 2.300-1.200 5-1.600 7.800-1.500 3 .1 5.400 1 7.400 2.300 2.300 1.500 4 3.700 4.500 6.300.5 2.300.2 4.800-.4 7.100-.9 3.400-2.200 6-2.700 8.800-.3 1.700-.3 3.300.100 4.800" fill="none" stroke="#5e95cf" stroke-width="1.500" stroke-linecap="round" stroke-linejoin="round"/><path d="M1174.200 704.600c-3 1.400-6.200 3.500-7.800 5.800-.5.800.1 1.200 1 1.200 3.500.1 7.700-1.500 10.600-1.600 1.200 0 1.300.9.600 1.700-2.200 2.800-6 5.200-9.600 6.700" fill="none" stroke="#5e95cf" stroke-width="1.500" stroke-linecap="round" stroke-linejoin="round"/><path d="M1177.600 709.900l1.700 1.200" stroke="#1f5fa8" stroke-width="1.300" stroke-linecap="round"/><path d="M1179 711.300l.8 1.400-1.200 1.100z" fill="#9aa3ad"/></svg>
<div class="a" id="wb"></div>
</body></html>
